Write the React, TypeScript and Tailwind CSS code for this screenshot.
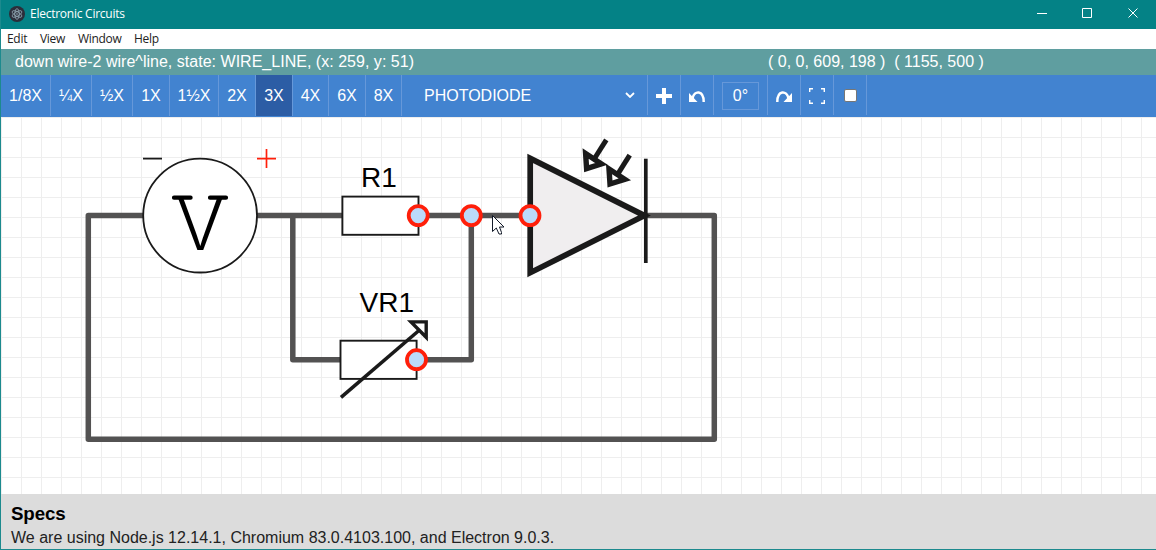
import type { ReactNode } from 'react';

const scales = [
  { label: '1/8X', cls: 'w-[50px]' },
  { label: '¼X', cls: 'w-[41px]' },
  { label: '½X', cls: 'w-[41px]' },
  { label: '1X', cls: 'w-[37px]' },
  { label: '1½X', cls: 'w-[49px]' },
  { label: '2X', cls: 'w-[37px]' },
  { label: '3X', cls: 'w-[37px] bg-[#2c5da5]' },
  { label: '4X', cls: 'w-[36px]' },
  { label: '6X', cls: 'w-[37px]' },
  { label: '8X', cls: 'w-[36px]' },
];

function TitleBar() {
  return (
    <header className="flex h-[29px] shrink-0 items-center bg-[#048286] text-white">
      <svg className="-mt-[2px] ml-2 size-4" viewBox="0 0 16 16" fill="none">
        <circle cx="8" cy="8" r="8" fill="#2b2e3a" />
        <g stroke="#9fb8c4" strokeWidth="0.7">
          <ellipse cx="8" cy="8" rx="2.200" ry="5.400" />
          <ellipse cx="8" cy="8" rx="2.200" ry="5.400" transform="rotate(60 8 8)" />
          <ellipse cx="8" cy="8" rx="2.200" ry="5.400" transform="rotate(120 8 8)" />
        </g>
        <circle cx="8" cy="8" r="0.8" fill="#9fb8c4" />
      </svg>
      <h1 className="-mt-px ml-[5px] font-['Open_Sans',sans-serif] text-[12px] tracking-[-0.25px]">Electronic Circuits</h1>
      <svg className="-mt-[4px] mr-[17px] ml-auto h-3 w-[104px]" viewBox="0 0 104 12" fill="none" stroke="#fff">
        <path d="M2 6.500h10M47.500 1.500h9v9h-9z" />
        <path d="M93.500 1.500l9 9M102.500 1.500l-9 9" />
      </svg>
    </header>
  );
}

function MenuBar() {
  return (
    <nav className="flex h-5 shrink-0 items-center bg-white pl-[6px] font-['Open_Sans',sans-serif] text-[12px] tracking-[-0.3px] text-[#222]">
      <span className="w-[33px]">Edit</span>
      <span className="w-[38px]">View</span>
      <span className="w-[56px]">Window</span>
      <span>Help</span>
    </nav>
  );
}

function StatusBar() {
  return (
    <div className="flex h-[26px] shrink-0 items-center bg-[#5f9ea0] pl-[14px] text-[16px] leading-none text-white">
      <span className="w-[753px] tracking-[0.02px] whitespace-pre">down wire-2 wire^line, state: WIRE_LINE, (x: 259, y: 51)</span>
      <span className="whitespace-pre">( 0, 0, 609, 198 )  ( 1155, 500 )</span>
    </div>
  );
}

function Tool({ children, wide }: { children: ReactNode; wide?: boolean }) {
  return (
    <div className={`flex h-10 items-center justify-center border-r border-[#6698d9] ${wide ? 'w-[54px]' : 'w-[33px]'}`}>
      {children}
    </div>
  );
}

function Toolbar() {
  return (
    <div className="flex h-[42px] shrink-0 bg-[#4283d0] text-[16px] text-white">
      {scales.map((s) => (
        <button key={s.label} className={`h-[41px] border-r border-[#6698d9] whitespace-nowrap ${s.cls}`}>
          {s.label}
        </button>
      ))}
      <div className="flex h-10 w-[246px] items-center justify-between border-r border-[#6698d9] pr-3 pl-[22px]">
        <span className="pt-[2px]">PHOTODIODE</span>
        <svg className="h-[6px] w-[10px]" viewBox="0 0 10 6" fill="none" stroke="#fff" strokeWidth="1.8">
          <path d="M1 1l4 4 4-4" />
        </svg>
      </div>
      <Tool>
        <svg className="mt-[2px] size-4" viewBox="0 0 16 16" fill="#fff">
          <path d="M6 0h4v6h6v4h-6v6H6v-6H0V6h6z" />
        </svg>
      </Tool>
      <Tool>
        <svg className="mt-[2px] h-3 w-4" viewBox="0 0 16 12">
          <path d="M3.500 8.500C5.200 0 14.700-.200 14.700 12" fill="none" stroke="#fff" strokeWidth="2.500" />
          <path d="M0 3V12h8.500z" fill="#fff" />
        </svg>
      </Tool>
      <Tool wide>
        <span className="mt-[2px] flex h-7 w-[37px] items-center justify-center border border-[#6698d9]">0°</span>
      </Tool>
      <Tool>
        <svg className="mt-[2px] h-3 w-4" viewBox="0 0 16 12">
          <path d="M12.500 8.500C10.800 0 1.300-.200 1.300 12" fill="none" stroke="#fff" strokeWidth="2.500" />
          <path d="M16 3V12H7.500z" fill="#fff" />
        </svg>
      </Tool>
      <Tool>
        <svg className="mt-[2px] size-4" viewBox="0 0 16 16" fill="none" stroke="#fff" strokeWidth="1.400">
          <path d="M.700 4V.700H4M12 .700h3.300V4M15.300 12v3.300H12M4 15.300H.700V12" />
        </svg>
      </Tool>
      <Tool>
        <span className="mt-px size-[13px] rounded-[2px] border border-[#767676] bg-white" />
      </Tool>
    </div>
  );
}

function PhotoArrow() {
  return (
    <>
      <path d="M606.300 139.800L594.500 158.500" strokeWidth="5" />
      <path d="M585.600 153.500L601.400 163.900L586.600 168.600Z" fill="#fff" strokeWidth="5.400" />
    </>
  );
}

const nodes = [
  [418.2, 215.6],
  [471.3, 215.6],
  [530, 215.6],
  [416.5, 359.7],
];

function Circuit() {
  return (
    <svg className="h-[377px] w-[1155px] shrink-0 bg-white" viewBox="1 117 1155 377" fill="none">
      <defs>
        <pattern id="grid" x="1" y="117" width="20" height="20" patternUnits="userSpaceOnUse">
          <path d="M0 .5H20M.5 0V20" stroke="#eeeeee" />
        </pattern>
      </defs>
      <rect x="1" y="117" width="1155" height="377" fill="url(#grid)" />
      <g stroke="#535252" strokeWidth="5.500" strokeLinecap="round" strokeLinejoin="round">
        <path d="M143 215.600H88.300V439.200H714.300V215.600H648" />
        <path d="M257 215.600H342M292.800 215.600V359.700H340" />
        <path d="M418 215.600H530M471.300 215.600V359.700H416" />
      </g>
      <circle cx="200.100" cy="215.600" r="56.900" fill="#fff" stroke="#1a1a1a" strokeWidth="1.800" />
      <text x="200.300" y="249.500" textAnchor="middle" className="font-['Inter',sans-serif] text-[72px] font-light" fill="#000">V</text>
      <path d="M174 197.700H190.600M210 197.700H226" stroke="#000" strokeWidth="4.200" strokeLinecap="round" />
      <path d="M143 158.600H162" stroke="#1a1a1a" strokeWidth="1.800" />
      <path d="M257 158.700H276M266.500 149V168" stroke="#ff1f0a" strokeWidth="1.700" />

      <g fill="#fff" stroke="#1a1a1a" strokeWidth="1.900">
        <rect x="342.400" y="196.600" width="76.100" height="38.200" />
        <rect x="340.500" y="340.700" width="76.100" height="38.200" />
      </g>
      <g className="font-['Liberation_Sans',sans-serif] text-[28px]" fill="#000">
        <text x="361" y="187">R1</text>
        <text x="359.500" y="312">VR1</text>
      </g>
      <path d="M341 397.300L419.500 330" stroke="#1a1a1a" strokeWidth="3.600" />
      <path d="M411 321.900H426.200V337.300Z" fill="#fff" stroke="#1a1a1a" strokeWidth="3.400" />

      <path d="M530.200 158.400L644.500 215.600L530.200 272.700Z" fill="#f0eeef" stroke="#1a1a1a" strokeWidth="5.700" />
      <path d="M645.800 158.700V263" stroke="#1a1a1a" strokeWidth="3.700" />
      <g stroke="#1a1a1a">
        <PhotoArrow />
        <g transform="translate(23.400 15.400)">
          <PhotoArrow />
        </g>
      </g>
      {nodes.map(([x, y]) => (
        <circle key={x} cx={x} cy={y} r="9.500" fill="#bbdafa" stroke="#ff1f0a" strokeWidth="3.800" />
      ))}
      <path
        d="M492.500 215.500V231.500L496.300 228L499 234H501.500V232.500L499.500 227H504Z"
        fill="#fff"
        stroke="#111827"
      />
    </svg>
  );
}

export default function App() {
  return (
    <div className="flex h-[550px] w-[1156px] flex-col overflow-hidden border-b border-l border-[#1c8a8e] font-['Liberation_Sans',sans-serif]">
      <TitleBar />
      <MenuBar />
      <StatusBar />
      <Toolbar />
      <Circuit />
      <footer className="h-[55px] shrink-0 bg-[#dcdcdc] pt-2 pl-[10px] text-black">
        <h2 className="text-[18.720px] leading-6 font-bold tracking-[-0.1px]">Specs</h2>
        <p className="text-[16px] leading-6 text-[#222]">We are using Node.js 12.14.1, Chromium 83.0.4103.100, and Electron 9.0.3.</p>
      </footer>
    </div>
  );
}
